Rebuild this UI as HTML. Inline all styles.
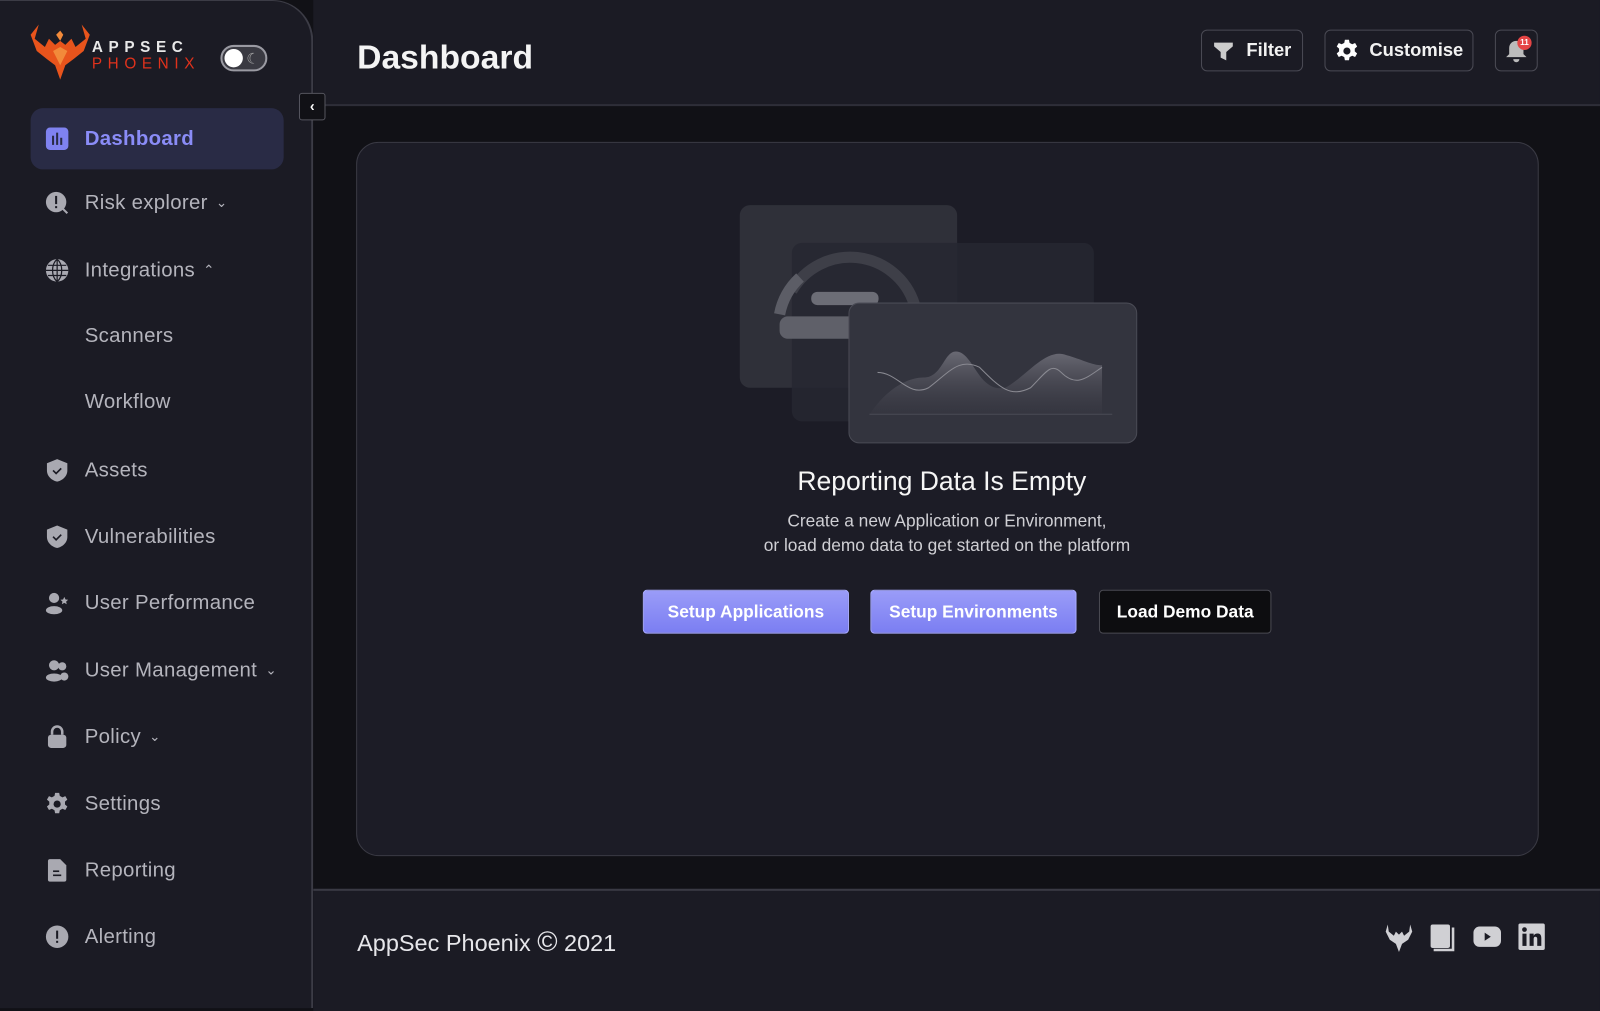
<!DOCTYPE html>
<html><head><meta charset="utf-8"><style>
*{box-sizing:border-box;margin:0;padding:0}
body{width:1600px;height:988px;background:#111116;font-family:"Liberation Sans",sans-serif;position:relative;overflow:hidden;color:#fff}
#w{position:absolute;left:0;top:0;width:1568px;height:969px;transform:scale(1.0204);transform-origin:0 0}
.sb{position:absolute;left:0;top:0;width:307px;height:988px;background:#1b1b24;border-top-right-radius:40px;border-right:2px solid #3c3c46;border-top:1px solid #3c3c46}
.top{position:absolute;left:307px;top:0;right:0;height:104px;background:#1b1b24;border-bottom:2px solid #2e2e38}
.foot{position:absolute;left:307px;top:871px;right:0;height:120px;background:#1b1b24;border-top:2px solid #3a3a44}
.card{position:absolute;left:349px;top:139px;width:1159px;height:700px;background:#1c1c26;border:1px solid #3a3a44;border-radius:22px}
.nav{position:absolute;left:44px;display:flex;align-items:center;font-size:20px;color:#b4b4bc;letter-spacing:.3px}
.nav svg{width:24px;height:24px;margin-right:15px;fill:#a9a9b1}
.chev{font-size:13px;margin-left:8px;color:#b4b4bc}
.btn{position:absolute;border:1.5px solid #4a4a54;border-radius:6px;display:flex;align-items:center;justify-content:center;font-weight:bold;font-size:18px;color:#f2f2f2}
.pb{position:absolute;top:578px;height:43px;border-radius:4px;font-size:17px;font-weight:bold;display:flex;align-items:center;justify-content:center;color:#fff}
</style></head><body><div id="w">
<div class="sb"></div>
<div class="top"></div>
<div class="foot"></div>
<svg style="position:absolute;left:28px;top:20px" width="62" height="60" viewBox="0 0 62 60">
<path d="M31 58 L26 44 L18 38 L8 30 L2 14 L10 4 L6 18 L16 26 L20 18 L26 24 L31 20 L36 24 L42 18 L46 26 L56 18 L52 4 L60 14 L54 30 L44 38 L36 44 Z" fill="#e8541c"/>
<path d="M31 20 L27 14 L31 10 L34 14 Z M24 30 L31 26 L38 30 L31 44Z" fill="#f28a3a"/>
</svg>
<div style="position:absolute;left:90px;top:38px;font-size:15px;font-weight:bold;letter-spacing:5.5px;color:#e8e8e8">APPSEC</div>
<div style="position:absolute;left:90px;top:54px;font-size:15px;letter-spacing:5.5px;color:#e0321c">PHOENIX</div>
<div style="position:absolute;left:216px;top:44px;width:46px;height:26px;border-radius:13px;background:#3a3a42;border:2px solid #9a9aa2"><div style="position:absolute;left:2px;top:2px;width:18px;height:18px;border-radius:50%;background:#fff"></div><div style="position:absolute;right:6px;top:3px;font-size:14px;color:#aaa">☾</div></div>
<div style="position:absolute;left:293px;top:91px;width:26px;height:27px;background:#111116;border:1px solid #55555e;border-radius:3px;color:#fff;font-size:14px;text-align:center;line-height:24px;font-weight:bold">‹</div>
<div style="position:absolute;left:30px;top:106px;width:248px;height:60px;border-radius:12px;background:#292b45"></div>
<div class="nav" style="top:124px;color:#8a8cf7;font-weight:bold"><svg viewBox="0 0 24 24" style="fill:#7f82f0"><rect x="1" y="1" width="22" height="22" rx="4"/><rect x="7" y="9" width="2" height="9" fill="#292b45"/><rect x="11" y="6" width="2" height="12" fill="#292b45"/><rect x="15" y="11" width="2" height="7" fill="#292b45"/></svg>Dashboard</div>
<div class="nav" style="top:187px"><svg viewBox="0 0 24 24"><circle cx="11" cy="11" r="10"/><path d="M17 17l5 5" stroke="#a9a9b1" stroke-width="2"/><rect x="10" y="5" width="2" height="8" fill="#1b1b24"/><rect x="10" y="15" width="2" height="2" fill="#1b1b24"/></svg>Risk explorer<span class="chev">⌄</span></div>
<div class="nav" style="top:253px"><svg viewBox="0 0 24 24"><circle cx="12" cy="12" r="11"/><path d="M1 12h22M12 1v22M3 7h18M3 17h18M12 1c-6 5-6 17 0 22M12 1c6 5 6 17 0 22" stroke="#1b1b24" stroke-width="1.2" fill="none"/></svg>Integrations<span class="chev">⌃</span></div>
<div class="nav" style="top:318px;left:83px">Scanners</div>
<div class="nav" style="top:383px;left:83px">Workflow</div>
<div class="nav" style="top:449px"><svg viewBox="0 0 24 24"><path d="M12 1l10 4v7c0 6-5 10-10 11C7 22 2 18 2 12V5z"/><path d="M8 12l3 3 5-5" stroke="#1b1b24" stroke-width="1.6" fill="none"/></svg>Assets</div>
<div class="nav" style="top:514px"><svg viewBox="0 0 24 24"><path d="M12 1l10 4v7c0 6-5 10-10 11C7 22 2 18 2 12V5z"/><path d="M8 12l3 3 5-5" stroke="#1b1b24" stroke-width="1.6" fill="none"/></svg>Vulnerabilities</div>
<div class="nav" style="top:579px"><svg viewBox="0 0 24 24"><circle cx="9" cy="7" r="5"/><ellipse cx="9" cy="19" rx="8" ry="4"/><path d="M19 6l1.2 2.5 2.6.3-2 1.8.6 2.6-2.4-1.4-2.4 1.4.6-2.6-2-1.8 2.6-.3z"/></svg>User Performance</div>
<div class="nav" style="top:645px"><svg viewBox="0 0 24 24"><circle cx="9" cy="7" r="5"/><ellipse cx="9" cy="19" rx="8" ry="4"/><circle cx="17" cy="8" r="4"/><ellipse cx="19" cy="18" rx="4" ry="4"/></svg>User Management<span class="chev">⌄</span></div>
<div class="nav" style="top:710px"><svg viewBox="0 0 24 24"><path d="M7 10V7a5 5 0 0110 0v3" stroke="#a9a9b1" stroke-width="2.5" fill="none"/><rect x="3" y="10" width="18" height="13" rx="3"/></svg>Policy<span class="chev">⌄</span></div>
<div class="nav" style="top:776px"><svg viewBox="0 0 24 24"><path d="M10 1h4l.6 3 2.6 1.4 2.8-1.2 2 3.4-2.3 2 0 2.8 2.3 2-2 3.4-2.8-1.2-2.6 1.4-.6 3h-4l-.6-3-2.6-1.4-2.8 1.2-2-3.4 2.3-2v-2.8l-2.3-2 2-3.4 2.8 1.2L9.4 4z"/><circle cx="12" cy="12" r="3.5" fill="#1b1b24"/></svg>Settings</div>
<div class="nav" style="top:841px"><svg viewBox="0 0 24 24"><path d="M3 3a2 2 0 012-2h10l6 6v14a2 2 0 01-2 2H5a2 2 0 01-2-2z"/><rect x="8" y="12" width="6" height="1.6" fill="#1b1b24"/><rect x="8" y="16" width="8" height="1.6" fill="#1b1b24"/></svg>Reporting</div>
<div class="nav" style="top:906px"><svg viewBox="0 0 24 24"><circle cx="12" cy="12" r="11"/><rect x="11" y="6" width="2" height="8" fill="#1b1b24"/><rect x="11" y="16" width="2" height="2" fill="#1b1b24"/></svg>Alerting</div>
<div style="position:absolute;left:350px;top:37px;font-size:33px;font-weight:bold;color:#f4f4f4">Dashboard</div>
<div class="btn" style="left:1177px;top:29px;width:100px;height:41px"><svg width="22" height="22" viewBox="0 0 24 24" style="margin-right:11px"><path d="M2 3h20v4l-7 6v9l-6-3v-6L2 7z" fill="#ccc"/></svg>Filter</div>
<div class="btn" style="left:1298px;top:29px;width:146px;height:41px"><svg width="24" height="24" viewBox="0 0 24 24" style="margin-right:10px"><path d="M10 1h4l.6 3 2.6 1.4 2.8-1.2 2 3.4-2.3 2 0 2.8 2.3 2-2 3.4-2.8-1.2-2.6 1.4-.6 3h-4l-.6-3-2.6-1.4-2.8 1.2-2-3.4 2.3-2v-2.8l-2.3-2 2-3.4 2.8 1.2L9.4 4z" fill="#fff"/><circle cx="12" cy="12" r="3.5" fill="#1b1b24"/></svg>Customise</div>
<div class="btn" style="left:1465px;top:29px;width:42px;height:41px"><svg width="24" height="24" viewBox="0 0 24 24"><path d="M12 2a7 7 0 017 7v6l3 3H2l3-3V9a7 7 0 017-7z" fill="#bbb"/><path d="M9 20h6a3 3 0 01-6 0z" fill="#bbb"/></svg><div style="position:absolute;left:21px;top:5px;width:14px;height:14px;border-radius:50%;background:#e54545;font-size:8px;line-height:14px;text-align:center;color:#fff">11</div></div>
<div class="card"></div>
<svg style="position:absolute;left:700px;top:190px" width="440" height="260" viewBox="0 0 440 260">
<defs><linearGradient id="a" x1="0" y1="0" x2="0" y2="1"><stop offset="0" stop-color="#6a6a74"/><stop offset="1" stop-color="#3a3a44" stop-opacity=".3"/></linearGradient></defs>
<rect x="25" y="11" width="213" height="179" rx="10" fill="#2f3039"/>
<rect x="76" y="48" width="296" height="175" rx="10" fill="#262731" opacity=".85"/>
<path d="M76 95 A66 66 0 0 1 196 108" stroke="#3e3f48" stroke-width="11" fill="none"/>
<path d="M84 82 A66 66 0 0 0 64 118" stroke="#5c5d66" stroke-width="11" fill="none"/>
<rect x="95" y="96" width="66" height="13" rx="6" fill="#6c6d76"/>
<rect x="64" y="120" width="120" height="22" rx="8" fill="#5f6069"/>
<rect x="132" y="107" width="282" height="137" rx="10" fill="#33343e" stroke="#4a4b55"/>
<path d="M153 215 C170 190 190 180 205 180 C225 180 225 150 240 155 C255 160 260 195 285 190 C305 180 325 150 345 158 C360 162 370 168 380 168 V216 H153Z" fill="url(#a)"/>
<path d="M160 175 C180 175 190 200 210 190 C230 175 240 160 260 170 C280 190 290 200 310 190 C325 175 330 165 340 175 C355 190 365 180 380 170" stroke="#8a8a92" stroke-width="1" fill="none"/>
<line x1="152" y1="216" x2="390" y2="216" stroke="#4a4b55"/>
</svg>
<div style="position:absolute;left:0;width:1846px;top:456px;text-align:center;font-size:26px;color:#f6f6f6">Reporting Data Is Empty</div>
<div style="position:absolute;left:0;width:1856px;top:499px;text-align:center;font-size:17px;line-height:24px;color:#cfcfd4">Create a new Application or Environment,<br>or load demo data to get started on the platform</div>
<div class="pb" style="left:630px;width:202px;background:linear-gradient(#9a9cf8,#7b7ef2);border:1px solid #a9abff">Setup Applications</div>
<div class="pb" style="left:853px;width:202px;background:linear-gradient(#9a9cf8,#7b7ef2);border:1px solid #a9abff">Setup Environments</div>
<div class="pb" style="left:1077px;width:169px;background:#0d0d10;border:1px solid #4a4a52">Load Demo Data</div>
<div style="position:absolute;left:350px;top:908px;font-size:23px;color:#e6e6ea">AppSec Phoenix <span style="font-size:27px">©</span> 2021</div>
<svg style="position:absolute;left:1357px;top:904px" width="28" height="30" viewBox="0 0 28 30"><path d="M14 29l-3-8-6-4-4-8 2-7 1 7 5 4 2-4 3 3 3-3 2 4 5-4 1-7 2 7-4 8-6 4z" fill="#d0d0d4"/></svg>
<svg style="position:absolute;left:1401px;top:905px" width="26" height="28" viewBox="0 0 26 28"><rect x="1" y="1" width="19" height="23" rx="2" fill="#d0d0d4"/><path d="M4 26h19V4" stroke="#d0d0d4" stroke-width="2.5" fill="none"/></svg>
<svg style="position:absolute;left:1443px;top:906px" width="29" height="24" viewBox="0 0 29 24"><rect x="1" y="2" width="27" height="20" rx="6" fill="#d0d0d4"/><path d="M12 8l6 4-6 4z" fill="#1b1b24"/></svg>
<svg style="position:absolute;left:1488px;top:905px" width="26" height="26" viewBox="0 0 26 26"><rect x="0" y="0" width="26" height="26" rx="2" fill="#d0d0d4"/><rect x="4" y="10" width="4" height="12" fill="#1b1b24"/><circle cx="6" cy="6" r="2.3" fill="#1b1b24"/><path d="M11 10h4v2c1-2 3-2.5 5-2 2 .5 2.5 2.5 2.5 4.5V22h-4v-7c0-1.5-.8-2-1.8-2S15 13.8 15 15v7h-4z" fill="#1b1b24"/></svg>
</div></body></html>
